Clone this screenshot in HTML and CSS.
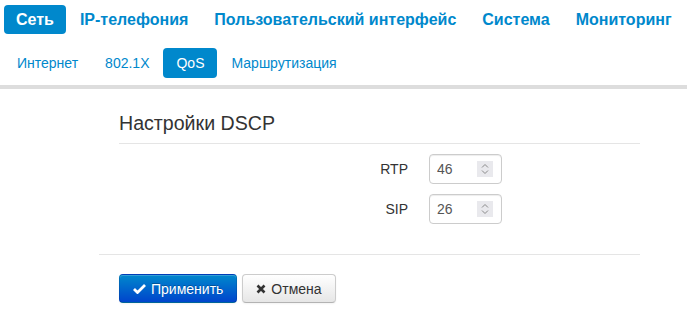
FILE: index.html
```html
<!DOCTYPE html>
<html lang="ru">

<head>
    <meta charset="UTF-8">
    <title>QoS</title>
    <link rel="stylesheet" href="styles.css">
</head>

<body>
    <ul class="nav main-nav">
        <li class="active"><a>Сеть</a></li>
        <li><a>IP-телефония</a></li>
        <li><a>Пользовательский интерфейс</a></li>
        <li><a>Система</a></li>
        <li><a>Мониторинг</a></li>
    </ul>

    <ul class="nav sub-nav">
        <li><a>Интернет</a></li>
        <li><a>802.1X</a></li>
        <li class="active"><a>QoS</a></li>
        <li><a>Маршрутизация</a></li>
    </ul>

    <div class="separator"></div>

    <form class="settings">
        <fieldset>
            <legend>Настройки DSCP</legend>

            <div class="control-group">
                <label>RTP</label>
                <div class="number-input">
                    <input type="text" value="46">
                    <span class="spinner">
                        <svg width="8" height="12" viewBox="0 0 8 12">
                            <path d="M1 4.5 L4 1.5 L7 4.5 M1 7.5 L4 10.5 L7 7.5" fill="none" stroke="#8a8a8a" stroke-width="1"/>
                        </svg>
                    </span>
                </div>
            </div>

            <div class="control-group">
                <label>SIP</label>
                <div class="number-input">
                    <input type="text" value="26">
                    <span class="spinner">
                        <svg width="8" height="12" viewBox="0 0 8 12">
                            <path d="M1 4.5 L4 1.5 L7 4.5 M1 7.5 L4 10.5 L7 7.5" fill="none" stroke="#8a8a8a" stroke-width="1"/>
                        </svg>
                    </span>
                </div>
            </div>
        </fieldset>

        <div class="form-actions">
            <button type="button" class="btn btn-primary">
                <svg width="13" height="11" viewBox="0 0 13 11">
                    <path d="M1 6 L4.5 9.5 L12 2" fill="none" stroke="#fff" stroke-width="2.8"/>
                </svg>
                Применить
            </button>
            <button type="button" class="btn">
                <svg width="10" height="10" viewBox="0 0 10 10">
                    <path d="M1.5 1.5 L8.5 8.5 M8.5 1.5 L1.5 8.5" fill="none" stroke="#333" stroke-width="2.6"/>
                </svg>
                Отмена
            </button>
        </div>
    </form>
</body>

</html>
```

FILE: styles.css
```css
body {
    font-family: "Liberation Sans", Arial, sans-serif;
    margin: 0;
    background: #fff;
    color: #333;
}

.nav {
    display: flex;
    list-style: none;
    margin: 0;
    padding: 0 4px;
    white-space: nowrap;
}

.nav li {
    flex-shrink: 0;
}

.nav a {
    display: block;
    color: #0088cc;
    border-radius: 4px;
}

.nav .active a {
    background: #0088cc;
    color: #fff;
}

.main-nav {
    padding-top: 5px;
}

.main-nav li {
    margin-right: 2px;
}

.main-nav a {
    font-size: 16px;
    font-weight: bold;
    line-height: 29px;
    padding: 0 12px;
}

.sub-nav {
    margin-top: 14px;
}

.sub-nav li {
    margin-right: 1px;
}

.sub-nav a {
    font-size: 14px;
    line-height: 30px;
    padding: 0 13px;
}

.separator {
    height: 4px;
    background: #dddddd;
    margin-top: 7px;
}

.settings {
    width: 541px;
    margin: 14px 0 0 99px;
}

fieldset {
    border: 0;
    margin: 0;
    padding: 0 0 20px 20px;
}

legend {
    display: block;
    width: 100%;
    padding: 0;
    font-size: 19.6px;
    line-height: 40px;
    color: #333;
    border-bottom: 1px solid #e5e5e5;
    margin-bottom: 10px;
}

.control-group {
    display: grid;
    grid-template-columns: 289px auto;
    column-gap: 21px;
    align-items: center;
    margin-bottom: 10px;
}

.control-group label {
    text-align: right;
    font-size: 14px;
    line-height: 30px;
}

.number-input {
    display: flex;
    align-items: center;
    width: 71px;
    height: 28px;
    border: 1px solid #cccccc;
    border-radius: 4px;
    box-shadow: inset 0 1px 1px rgba(0, 0, 0, 0.075);
}

.number-input input {
    width: 40px;
    border: 0;
    padding: 0 0 0 7px;
    font-family: inherit;
    font-size: 14px;
    color: #555;
    background: transparent;
    outline: none;
}

.spinner {
    display: flex;
    align-items: center;
    justify-content: center;
    width: 16px;
    height: 16px;
    margin-left: auto;
    margin-right: 8px;
    background: #e9e9ed;
}

.form-actions {
    border-top: 1px solid #e5e5e5;
    padding: 19px 20px 20px;
    display: flex;
    gap: 5px;
}

.btn {
    display: flex;
    align-items: center;
    gap: 5px;
    height: 29px;
    padding: 0 13px;
    font-family: inherit;
    font-size: 14px;
    color: #333;
    background: linear-gradient(#ffffff, #e6e6e6);
    border: 1px solid #cccccc;
    border-bottom-color: #b3b3b3;
    border-radius: 4px;
    box-shadow: inset 0 1px 0 rgba(255, 255, 255, 0.2), 0 1px 2px rgba(0, 0, 0, 0.05);
}

.btn-primary {
    color: #fff;
    text-shadow: 0 -1px 0 rgba(0, 0, 0, 0.25);
    background: linear-gradient(#0088cc, #0044cc);
    border-color: rgba(0, 0, 0, 0.1) rgba(0, 0, 0, 0.1) rgba(0, 0, 0, 0.25);
}
```
